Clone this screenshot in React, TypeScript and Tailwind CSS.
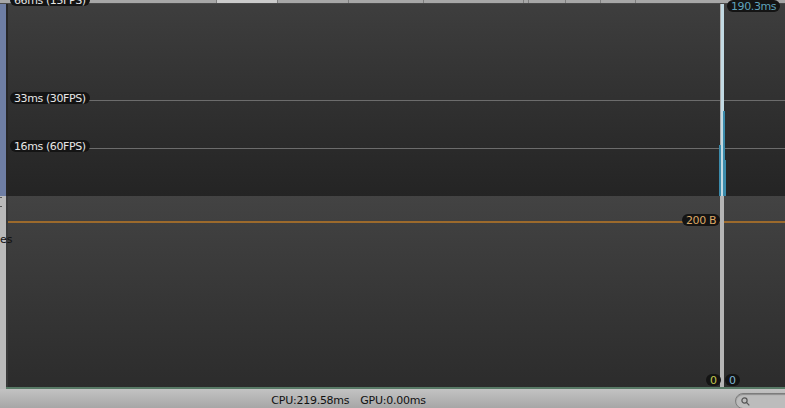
import React from "react";

const Pill = ({
  children,
  className,
}: {
  children: React.ReactNode;
  className: string;
}) => (
  <div
    className={`absolute h-[12px] px-[4px] rounded-full bg-[#141414] flex items-center text-[11px] tracking-[-0.4px] leading-none whitespace-nowrap z-10 ${className}`}
  >
    {children}
  </div>
);

const App = () => {
  const tabs = [
    { w: "w-[217px]", sel: false },
    { w: "w-[61px]", sel: true },
    { w: "w-[71px]", sel: false },
    { w: "w-[75px]", sel: false },
    { w: "w-[100px]", sel: false },
    { w: "w-[5px]", sel: false },
    { w: "w-[37px]", sel: false },
    { w: "w-[35px]", sel: false },
    { w: "w-[35px]", sel: false },
  ];

  return (
    <div className="w-[785px] h-[408px] flex flex-col overflow-hidden bg-[#2a2a2a] font-['DejaVu_Sans',sans-serif]">
      {/* tab strip */}
      <div className="h-[4px] flex bg-[#a7a7a7] border-b border-[#4a4a4a]">
        {tabs.map((t, i) => (
          <div
            key={i}
            className={`${t.w} h-full border-r border-[#7e7e7e] ${
              t.sel ? "bg-[#cbcbcb]" : "bg-[#a7a7a7]"
            }`}
          />
        ))}
        <div className="flex-1" />
      </div>

      <div className="flex-1 flex">
        {/* left strip */}
        <div className="w-[6px] flex flex-col">
          <div className="h-[192px] bg-[#6e7ea4]" />
          <div className="flex-1 bg-[#bababa] relative">
            <div className="absolute left-0 top-[1px] w-[2px] h-[1px] bg-[#555]" />
            <div className="absolute left-0 top-[10px] w-[2px] h-[1px] bg-[#555]" />
            <span className="absolute left-0 top-[38px] text-[11px] leading-none text-[#111] z-10">
              es
            </span>
          </div>
        </div>

        {/* graphs */}
        <div className="flex-1 flex flex-col border-b-2 border-[#587a66]">
          <div className="h-[192px] relative bg-gradient-to-b from-[#3e3e3e] to-[#242424] border-l-2 border-[#262626]">
            <Pill className="left-[2px] top-[-10px] text-[#e6e6e6]">66ms (15FPS)</Pill>

            <div className="absolute left-[80px] right-0 top-[96px] h-px bg-[#6c6c6c]" />
            <Pill className="left-[2px] top-[88px] text-[#e6e6e6]">33ms (30FPS)</Pill>

            <div className="absolute left-[80px] right-0 top-[144px] h-px bg-[#6c6c6c]" />
            <Pill className="left-[2px] top-[136px] text-[#e6e6e6]">16ms (60FPS)</Pill>

            {/* selected frame */}
            <div className="absolute left-[712px] top-0 bottom-0 w-[4px] bg-[#a9a9a9]" />
            <div className="absolute left-[713px] top-0 bottom-0 w-[3px] bg-[#c3dae3]" />
            <div className="absolute left-[711px] top-[141px] bottom-0 w-[2px] bg-[#3b8bab]" />
            <div className="absolute left-[715px] top-[107px] bottom-0 w-[2px] bg-[#3b8bab]" />
            <div className="absolute left-[717px] top-[156px] bottom-0 w-[1px] bg-[#3b8bab]" />

            <Pill className="left-[719px] top-[-4px] text-[#5fa2bb]">190.3ms</Pill>
          </div>

          <div className="flex-1 relative bg-gradient-to-b from-[#434343] to-[#2c2c2c] border-l-2 border-[#393939]">
            <div className="absolute left-0 right-0 top-[25px] h-[2px] bg-[#9c6a2c]" />
            <Pill className="left-[674px] top-[18px] text-[#dca866]">200 B</Pill>

            <div className="absolute left-[712px] top-0 bottom-0 w-[4px] bg-[#b5b5b5]" />

            <Pill className="left-[698px] bottom-[1px] text-[#c2c84e]">0</Pill>
            <Pill className="left-[717px] bottom-[1px] text-[#80b9d6]">0</Pill>
          </div>
        </div>
      </div>

      {/* status bar */}
      <div className="h-[19px] flex items-center bg-gradient-to-b from-[#c3c3c3] to-[#a6a6a6] relative">
        <div className="flex-1 flex justify-center gap-[11px] pr-[88px] text-[11px] tracking-[-0.25px] text-[#111] leading-none pt-[3px]">
          <span>CPU:219.58ms</span>
          <span>GPU:0.00ms</span>
        </div>
        <div className="absolute left-[735px] top-[4px] w-[70px] h-[16px] rounded-full border border-[#7c7c7c] bg-[#bcbcbc] shadow-[inset_0_1px_1px_rgba(0,0,0,0.25)] flex items-center pl-[5px]">
          <svg width="9" height="9" viewBox="0 0 9 9" fill="none" stroke="#555" strokeWidth="1.2">
            <circle cx="3.5" cy="3.5" r="2.6" />
            <path d="M5.4 5.4 L8.3 8.3" />
          </svg>
        </div>
      </div>
    </div>
  );
};

export default App;
